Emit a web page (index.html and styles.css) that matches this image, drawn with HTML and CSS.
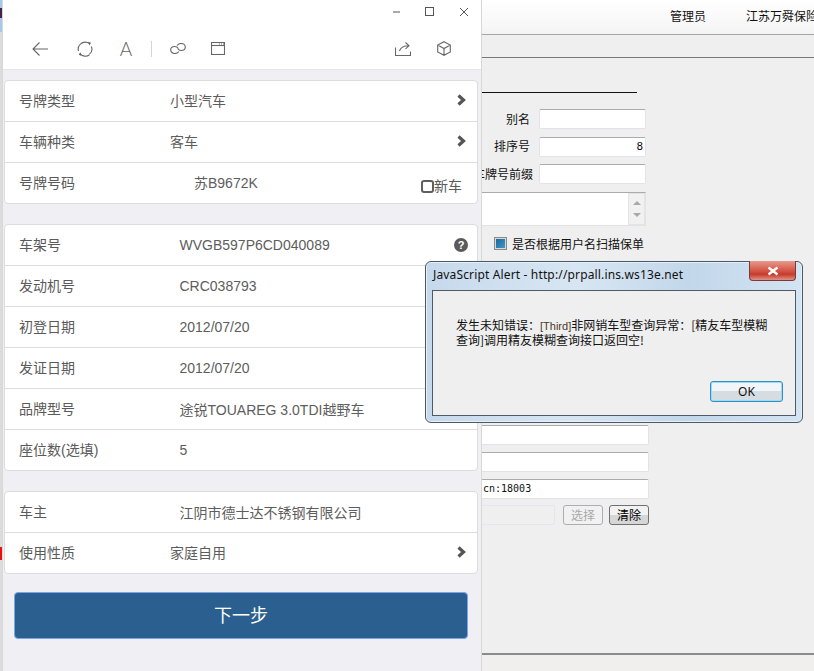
FILE: index.html
```html
<!DOCTYPE html>
<html lang="zh">
<head>
<meta charset="utf-8">
<title>车辆信息</title>
<link rel="stylesheet" href="styles.css">
</head>
<body>
<div class="desktop">

  <div class="page">
    <div class="topbar"><span class="user">管理员</span><span class="company">江苏万舜保险</span></div>
    <div class="subbar"></div>
    <div class="content">
      <div class="rule"></div>
      <div class="frow frow-a"><label class="flabel">别名</label><div class="input"></div></div>
      <div class="frow"><label class="flabel">排序号</label><div class="input num">8</div></div>
      <div class="frow"><label class="flabel flabel-long">车牌号前缀</label><div class="input"></div></div>
      <div class="area"><div class="scroll"><i class="up"></i><i class="down"></i></div></div>
      <div class="check"><span class="box"></span>是否根据用户名扫描保单</div>
      <div class="lower">
        <div class="input wide"></div>
        <div class="input wide"></div>
        <div class="input wide mono">cn:18003</div>
        <div class="pick">
          <div class="input disabled"></div>
          <div class="btn off">选择</div>
          <div class="btn on">清除</div>
        </div>
      </div>
    </div>
    <div class="foot"></div>
  </div>

  <div class="edgebits"><i class="b1"></i><i class="b2"></i><i class="b3"></i></div>

  <section class="phone">
    <div class="titlebar">
      <svg class="wbtn" viewBox="0 0 12 12"><path d="M1 6h7" /></svg>
      <svg class="wbtn" viewBox="0 0 12 12"><rect x=".5" y="1.500" width="8" height="8"/></svg>
      <svg class="wbtn" viewBox="0 0 12 12"><path d="M2 2l8 8M10 2l-8 8"/></svg>
    </div>
    <div class="toolbar">
      <svg class="tool t-back" viewBox="0 0 18 16"><path d="M17 8H2M8.500 1.500 2 8l6.500 6.500"/></svg>
      <svg class="tool t-reload" viewBox="0 0 16 16"><path d="M3 3.500A6.700 6.700 0 0 1 12.500 2.700M14.300 5.500A6.700 6.700 0 0 1 12.500 13.200M12.500 13.700A6.700 6.700 0 0 1 2.800 12.300M1.500 10A6.700 6.700 0 0 1 3 3.500"/><path class="fillp" d="M11 .8 14 1.800 12.600 4.600zM4.500 15 1.800 13.800 3.400 11.300z"/></svg>
      <span class="t-font">A</span>
      <span class="tsep"></span>
      <svg class="tool t-link" viewBox="0 0 16 11"><path d="M9 8.500c-1 1.300-2.500 2-4 2-2.300 0-4.300-1.500-4.300-3.600C.7 4.700 2.700 3.500 4.800 3.500c1.500 0 2.800.8 3.500 2"/><path d="M7 2.500c1-1.300 2.500-2 4-2 2.300 0 4.300 1.500 4.300 3.600 0 2.200-2 3.400-4.100 3.400-1.500 0-2.800-.8-3.500-2"/></svg>
      <svg class="tool t-win" viewBox="0 0 14 13"><rect x=".5" y=".5" width="13" height="12"/><path d="M.5 3.500h13"/><path class="dots" d="M8 2h1M10 2h1M12 2h1"/></svg>
      <span class="tspacer"></span>
      <svg class="tool t-share" viewBox="0 0 16 15"><path d="M.5 6.500v8h15v-4"/><path d="M4.500 10C5.500 6.500 8 4.800 13.500 4.800M10.500 1.500l3.500 3.300-3.500 3"/></svg>
      <svg class="tool t-box" viewBox="0 0 14 15"><path d="M7 .7 13.300 4v7L7 14.300.7 11V4zM.7 4 7 7.500 13.300 4M7 7.500v6.800"/></svg>
    </div>

    <div class="form">
      <div class="card">
        <div class="row"><span class="key">号牌类型</span><span class="val sel">小型汽车</span><svg class="chev" viewBox="0 0 9 12"><path d="M1.500 1.500 6.500 6l-5 4.500"/></svg></div>
        <div class="row"><span class="key">车辆种类</span><span class="val sel">客车</span><svg class="chev" viewBox="0 0 9 12"><path d="M1.500 1.500 6.500 6l-5 4.500"/></svg></div>
        <div class="row"><span class="key">号牌号码</span><span class="val plate">苏B9672K</span><span class="newcar"><i class="cb"></i>新车</span></div>
      </div>
      <div class="card">
        <div class="row"><span class="key">车架号</span><span class="val">WVGB597P6CD040089</span><span class="help">?</span></div>
        <div class="row"><span class="key">发动机号</span><span class="val">CRC038793</span></div>
        <div class="row"><span class="key">初登日期</span><span class="val">2012/07/20</span></div>
        <div class="row"><span class="key">发证日期</span><span class="val">2012/07/20</span></div>
        <div class="row"><span class="key">品牌型号</span><span class="val">途锐TOUAREG 3.0TDI越野车</span></div>
        <div class="row"><span class="key">座位数(选填)</span><span class="val">5</span></div>
      </div>
      <div class="card">
        <div class="row"><span class="key">车主</span><span class="val">江阴市德士达不锈钢有限公司</span></div>
        <div class="row"><span class="key">使用性质</span><span class="val sel">家庭自用</span><svg class="chev" viewBox="0 0 9 12"><path d="M1.500 1.500 6.500 6l-5 4.500"/></svg></div>
      </div>
      <div class="next">下一步</div>
    </div>
  </section>

  <section class="alert">
    <div class="a-title">
      <span class="a-name">JavaScript Alert - http://prpall.ins.ws13e.net</span>
      <span class="a-close"><svg viewBox="0 0 14 10"><path d="M2.500 1.500 11.500 8.500M11.500 1.500 2.500 8.500"/></svg></span>
    </div>
    <div class="a-body">
      <p class="a-msg">发生未知错误：<span class="a-tag">[Third]</span>非网销车型查询异常：[精友车型模糊查询]调用精友模糊查询接口返回空!</p>
      <div class="a-actions"><span class="a-ok">OK</span></div>
    </div>
  </section>

</div>
</body>
</html>
```
FILE: styles.css
```css
* { box-sizing: border-box; }
html, body { margin: 0; padding: 0; }
body { width: 814px; height: 671px; overflow: hidden; font-family: "Liberation Sans", "Noto Sans CJK SC", sans-serif; }

.desktop { position: relative; width: 814px; height: 671px; overflow: hidden; background: #efefef; }

/* background page */
.page { display: flex; flex-direction: column; height: 671px; font-family: "Noto Sans CJK SC", sans-serif; color: #111; }
.topbar { height: 35px; flex: none; display: flex; align-items: center; padding-left: 670px; gap: 40px; font-size: 12px; white-space: nowrap; background: linear-gradient(#ffffff, #f4f4f4); border-bottom: 1px solid #a5a5a5; padding-bottom: 4px; }
.subbar { height: 23px; flex: none; background: #efefef; border-bottom: 1px solid #777; }
.content { flex: 1; padding: 34px 0 0 478px; }
.rule { width: 159px; height: 1px; background: #111; margin-bottom: 16px; }
.frow { display: flex; align-items: center; height: 20px; margin-bottom: 7.500px; width: 168px; justify-content: flex-end; }
.flabel { font-size: 12px; margin: -2px 9px 0 0; white-space: nowrap; }
.flabel-long { margin-right: 6px; }
.input { width: 107px; height: 20px; flex: none; background: #fff; border: 1px solid #e2e3e8; border-top-color: #ababab; border-radius: 2px; font-size: 12px; line-height: 18px; padding: 0 2px; }
.num { text-align: right; font-family: "DejaVu Sans Mono", monospace; font-size: 11px; }
.area { position: relative; width: 168px; height: 34px; background: #fff; border: 1px solid #e2e3e8; border-top-color: #ababab; border-left: 0; margin-bottom: 11px; }
.scroll { position: absolute; right: 0; top: 0; bottom: 0; width: 17px; background: #f1f1f1; border: 1px solid #e4e4e4; display: flex; flex-direction: column; justify-content: space-between; align-items: center; padding: 7px 0; }
.up, .down { width: 0; height: 0; border-left: 4px solid transparent; border-right: 4px solid transparent; }
.up { border-bottom: 4px solid #a8a8a8; }
.down { border-top: 4px solid #a8a8a8; }
.check { display: flex; align-items: center; font-size: 12px; padding-left: 16px; height: 14px; margin-bottom: 174px; white-space: nowrap; line-height: 12px; }
.box { width: 13px; height: 13px; margin-right: 5px; border: 1px solid #8a8a8a; outline: 1px solid #d8d8d8; outline-offset: -2px; background: linear-gradient(135deg, #1c5f91, #3fa0d3); background-clip: padding-box; padding: 2px; }
.lower { display: flex; flex-direction: column; gap: 7px; width: 171px; }
.wide { width: 171px; border-left: 0; border-radius: 0 2px 2px 0; }
.mono { font-family: "DejaVu Sans Mono", monospace; font-size: 10px; padding-left: 5px; border-top-color: #ababab; white-space: nowrap; line-height: 18px; }
.pick { display: flex; align-items: center; margin-top: -1px; }
.disabled { width: 77px; background: #efefef; border: 1px solid #e3e6ea; border-left: 0; }
.btn { width: 40px; height: 20px; font-size: 12px; line-height: 18px; text-align: center; border-radius: 3px; }
.off { margin-left: 8px; color: #a9a9a9; border: 1px solid #adadad; background: #f1f1f1; }
.on { margin-left: 6px; color: #000; border: 1px solid #707070; background: linear-gradient(#f2f2f2 50%, #d6d6d6 50%); }
.foot { height: 18px; flex: none; background: #f1eeee; border-top: 2px solid #8c8c8c; }

.edgebits { position: absolute; left: 0; top: 0; width: 2px; height: 671px; background: #dcdcdc; }
.edgebits i { position: absolute; left: 0; width: 2px; }
.b1 { top: 0; height: 32px; background: #a6c9ea; }
.b2 { top: 8px; height: 10px; background: #44224a; }
.b3 { top: 547px; height: 13px; background: #e81010; }

/* phone window */
.phone { position: absolute; left: 2px; top: 0; width: 480px; height: 671px; background: #efeff4; border-left: 1px solid #d8d8d8; border-right: 1px solid #d8d8d8; display: flex; flex-direction: column; color: #555; }
.titlebar { height: 28px; flex: none; background: #fff; display: flex; justify-content: flex-end; align-items: center; padding: 0 11px 5px 0; gap: 21px; }
.wbtn { width: 12px; height: 12px; fill: none; stroke: #555; stroke-width: 1; }
.toolbar { height: 42px; flex: none; background: #fff; display: flex; align-items: center; padding: 0 30px 0 28px; border-bottom: 1px solid #e6e6e6; }
.tool { fill: none; stroke: #666; stroke-width: 1.100; flex: none; }
.fillp { fill: #666; stroke: none; }
.dots { stroke-width: 1; }
.t-back { width: 18px; height: 16px; }
.t-reload { width: 16px; height: 16px; margin-left: 28px; }
.t-font { width: 14px; font-size: 19px; color: #666; margin-left: 26px; font-family: "Lato", "Liberation Sans", sans-serif; font-weight: 300; line-height: 20px; text-align: center; }
.tsep { width: 1px; height: 16px; background: #d5d5d5; margin-left: 18px; }
.t-link { width: 16px; height: 11px; margin-left: 18px; }
.t-win { width: 14px; height: 13px; margin-left: 25px; }
.tspacer { flex: 1; }
.t-share { width: 16px; height: 15px; }
.t-box { width: 14px; height: 15px; margin-left: 26px; }

.form { flex: 1; padding: 10px 3px 0 1px; display: flex; flex-direction: column; gap: 20px; }
.card { background: #fff; border: 1px solid #dcdcdc; border-radius: 4px; overflow: hidden; }
.row { height: 41px; display: flex; align-items: center; position: relative; padding-left: 14px; font-size: 14px; border-top: 1px solid #ddd; }
.row:first-child { border-top: 0; height: 40px; }
.key { width: 151px; flex: none; margin-top: -2px; color: #5a5a5a; white-space: nowrap; }
.val { white-space: nowrap; padding-left: 9.500px; color: #5d5d5d; font-size: 14px; }
.sel { padding-left: 0; margin-top: -2px; }
.plate { padding-left: 24px; margin-top: -2px; }
.chev { position: absolute; right: 11px; top: 50%; margin-top: -7px; width: 9px; height: 12px; fill: none; stroke: #555; stroke-width: 3.200; }
.newcar { position: absolute; right: 15px; top: 14px; display: flex; align-items: center; color: #5a5a5a; font-size: 14px; line-height: 18px; }
.cb { width: 13px; height: 13px; border: 2.500px solid #5f5f5f; border-radius: 3px; background: #fff; }
.help { position: absolute; right: 9px; top: 13px; width: 14px; height: 14px; border-radius: 50%; background: #5a5a5a; color: #fff; font-size: 11px; font-weight: 700; line-height: 14px; text-align: center; }
.next { margin: -2px 0 0 10px; width: 454px; height: 47px; flex: none; background: #2b5f8f; color: #fff; border: 1px solid #7ba6e6; border-radius: 4px; text-align: center; line-height: 47px; font-size: 18px; }

/* alert */
.alert { position: absolute; left: 425px; top: 261px; width: 378px; height: 162px; border: 1px solid #4a5868; border-radius: 6px; background: linear-gradient(90deg, #c6d9ec, #d8e6f3 40%, #c2d7ea 70%, #d3e4f3); padding: 0 6px 6px; display: flex; flex-direction: column; box-shadow: inset 0 0 0 1px #e6f0f8; }
.a-title { height: 28px; flex: none; position: relative; font-family: "Noto Sans", "Liberation Sans", sans-serif; font-size: 12px; line-height: 26px; color: #111; padding-left: 1px; }
.a-name { white-space: nowrap; letter-spacing: .15px; }
.a-close { position: absolute; right: 0; top: -1px; width: 47px; height: 20px; border: 1px solid #7b3a3a; border-top: 0; border-radius: 0 0 4px 4px; background: linear-gradient(#e89a8e, #d2503f 55%, #c53b2b 70%, #e19387); display: flex; align-items: center; justify-content: center; }
.a-close svg { width: 14px; height: 10px; fill: none; stroke: #fff; stroke-width: 2.400; }
.a-body { flex: 1; background: #efefef; border: 1px solid #505a66; padding: 27px 0 0 23px; display: flex; flex-direction: column; }
.a-msg { margin: 0; width: 318px; font-family: "Noto Sans CJK SC", sans-serif; font-size: 12px; line-height: 14px; color: #111; }
.a-tag { font-family: "Liberation Sans", sans-serif; font-size: 11px; color: #4a3a2a; }
.a-actions { margin-top: auto; display: flex; justify-content: flex-end; padding: 0 12px 13px 0; }
.a-ok { width: 73px; height: 21px; border: 1px solid #2d8fc4; border-radius: 3px; background: linear-gradient(#f1f5f8 50%, #d5dde2 50%); font-family: "Noto Sans", sans-serif; font-size: 12px; line-height: 19px; text-align: center; color: #111; box-shadow: inset 0 0 0 1px #9fdcf4; }
```
